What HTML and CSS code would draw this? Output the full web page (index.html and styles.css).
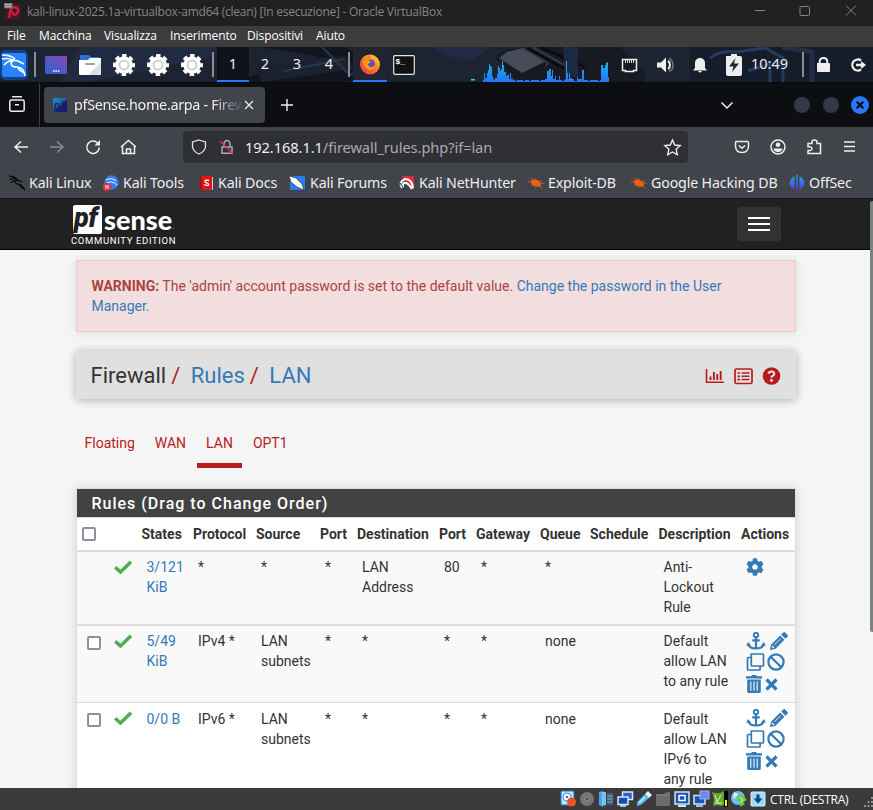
FILE: index.html
```html
<!DOCTYPE html>
<html lang="it">
<head>
<meta charset="utf-8">
<title>pfSense.home.arpa - Firewall: Rules: LAN</title>
<link rel="stylesheet" href="styles.css">
</head>
<body>
<svg class="defs" width="0" height="0">
  <defs>
    <linearGradient id="gMon" x1="0" y1="1" x2="1" y2="0"><stop offset="0" stop-color="#2a62d4"/><stop offset="1" stop-color="#8a47b4"/></linearGradient>
    <linearGradient id="gCpu" x1="0" y1="0" x2="0" y2="1"><stop offset="0" stop-color="#16b8f0"/><stop offset="1" stop-color="#2673f5"/></linearGradient>
    <linearGradient id="gFox" x1="1" y1="0" x2="0.2" y2="1"><stop offset="0" stop-color="#ffe13c"/><stop offset=".45" stop-color="#ff8b1c"/><stop offset="1" stop-color="#f5304c"/></linearGradient>
    <linearGradient id="gOff" gradientUnits="userSpaceOnUse" x1="0" y1="0" x2="0" y2="16"><stop offset="0" stop-color="#10b5c0"/><stop offset=".5" stop-color="#3a6cf0"/><stop offset="1" stop-color="#6a2fc4"/></linearGradient>
    <linearGradient id="gPf" x1="0" y1="0" x2="1" y2="1"><stop offset="0" stop-color="#1d86e0"/><stop offset=".5" stop-color="#1566b8"/><stop offset=".55" stop-color="#211a80"/><stop offset="1" stop-color="#1c1272"/></linearGradient>
    <symbol id="gear" viewBox="0 0 22 22"><circle cx="11" cy="11" r="9.400" fill="none" stroke="#fff" stroke-width="3.200" stroke-dasharray="4.400 2.980" stroke-dashoffset="2.200"/><circle cx="11" cy="11" r="6.300" fill="#fff" stroke="#fff" stroke-width="5"/><circle cx="11" cy="11" r="4.500" fill="#fff" stroke="#c3c6ca" stroke-width="1.600"/></symbol>
    <symbol id="dragon" viewBox="0 0 16 16"><path d="M0 1.200C3 1 5 1.500 7 3.200 M1 4.500C3 3.200 6 3 8 4 M2.500 7.300C4.500 5.500 7 4.800 10 5.500 L12.800 7 M7 4C5.500 7 6.500 9 10 9.500C13 10 14 11.500 15.600 15 M10.500 9.800C11 12 13 12 13.800 13.500" fill="none" stroke="currentColor" stroke-width="1.300" stroke-linecap="round"/></symbol>
    <symbol id="bug" viewBox="0 0 16 13"><ellipse cx="8" cy="6.700" rx="5.300" ry="3.200" transform="rotate(25 8 6.700)" fill="#ef6010"/><path d="M4 5L0 5.500 M5 3L3 1 M7 3L8 1.500 M12 6.500L15.800 7 M12 9L14 12 M6 9L3 8.500 M8 10L7 11.500 M11 5L13.500 4.500" stroke="#ef6010" stroke-width=".8"/></symbol>
    <symbol id="check" viewBox="0 0 18 14"><path d="M1.200 7.200L6.500 12L17 1.800" fill="none" stroke="#4caf50" stroke-width="3.500"/></symbol>
    <symbol id="cog" viewBox="0 0 512 512"><path fill="currentColor" d="M487.400 315.700l-42.600-24.600c4.300-23.200 4.300-47 0-70.200l42.600-24.600c4.900-2.800 7.100-8.600 5.500-14-11.100-35.600-30-67.800-54.700-94.600-3.800-4.100-10-5.100-14.800-2.300L380.800 110c-17.900-15.400-38.500-27.300-60.800-35.100V25.800c0-5.600-3.900-10.500-9.400-11.700-36.700-8.200-74.300-7.800-109.200 0-5.500 1.200-9.400 6.100-9.400 11.700V75c-22.200 7.900-42.800 19.800-60.800 35.100L88.700 85.500c-4.900-2.800-11-1.900-14.800 2.300-24.700 26.700-43.600 58.900-54.700 94.600-1.700 5.400.6 11.200 5.500 14L67.300 221c-4.300 23.200-4.300 47 0 70.200l-42.600 24.600c-4.900 2.800-7.100 8.600-5.500 14 11.100 35.600 30 67.800 54.700 94.600 3.800 4.100 10 5.100 14.800 2.300l42.600-24.600c17.900 15.400 38.500 27.300 60.800 35.100v49.200c0 5.600 3.900 10.500 9.400 11.700 36.700 8.200 74.300 7.800 109.200 0 5.500-1.200 9.400-6.100 9.400-11.700v-49.200c22.200-7.900 42.800-19.800 60.800-35.100l42.600 24.600c4.900 2.800 11 1.900 14.800-2.300 24.700-26.700 43.600-58.900 54.700-94.600 1.500-5.500-.7-11.300-5.600-14.100zM256 336c-44.100 0-80-35.900-80-80s35.900-80 80-80 80 35.900 80 80-35.900 80-80 80z"/></symbol>
    <symbol id="anchor" viewBox="0 0 20 18"><circle cx="10" cy="3" r="2.200" fill="none" stroke="currentColor" stroke-width="1.900"/><path d="M10 5V16 M6.200 8.300H13.800 M2.300 11.800C2.800 15 5.500 16.400 10 16.400S17.200 15 17.700 11.800" fill="none" stroke="currentColor" stroke-width="2.200"/><path d="M.2 13.800L2.200 10L5 13.800z M19.800 13.800L17.800 10L15 13.800z" fill="currentColor"/></symbol>
    <symbol id="pencil" viewBox="0 0 18 18"><path d="M0 18L1 12.800L10.200 3.600L14.400 7.800L5.200 17z M11.200 2.600L13.300.5Q14.200-.3 15.100.5L17.500 2.900Q18.300 3.800 17.500 4.700L15.400 6.800z" fill="currentColor"/><path d="M4.500 12.800L10.700 6.600" stroke="#f9f9f9" stroke-width=".9"/><path d="M1.900 14L4 16" stroke="#f9f9f9" stroke-width="1.300"/></symbol>
    <symbol id="clone" viewBox="0 0 18 18"><path d="M4.800 1H16.300Q17 1 17 1.700V12.300Q17 13 16.300 13H5.500Q4.800 13 4.800 12.300z M4.500 4.500H1.700Q1 4.500 1 5.200V16.300Q1 17 1.700 17H13Q13.600 17 13.600 16.300V13.500" fill="none" stroke="currentColor" stroke-width="1.700"/></symbol>
    <symbol id="ban" viewBox="0 0 18 18"><circle cx="9" cy="9" r="7.600" fill="none" stroke="currentColor" stroke-width="2.200"/><path d="M3.700 3.700L14.300 14.300" stroke="currentColor" stroke-width="2.200"/></symbol>
    <symbol id="trash" viewBox="0 0 16 18"><path d="M0 1.200H5L6 0H10L11 1.200H16V3.400H0z M1.200 4.500H14.800V16.500Q14.800 18 13.300 18H2.700Q1.200 18 1.200 16.500z" fill="currentColor"/><path d="M4.800 6.500V15.800 M8 6.500V15.800 M11.200 6.500V15.800" stroke="#f9f9f9" stroke-width="1.100"/></symbol>
    <symbol id="times" viewBox="0 0 13 13"><path d="M1.500 1.500L11.500 11.500 M11.500 1.500L1.500 11.500" stroke="currentColor" stroke-width="3.200"/></symbol>
  </defs>
</svg>

<header class="titlebar">
  <svg class="vbox" viewBox="0 0 16 16"><rect x="1" y="1" width="15" height="15" rx="1" fill="#3c1d24"/><path d="M5 14C5 7 7 3.500 10.500 4C14 4.600 14.200 8.500 11.500 10.500C9 12 7.500 10 8.300 7.800" fill="none" stroke="#e0173d" stroke-width="2.200"/><rect x="0" y="0" width="8" height="5" fill="#777"/><path d="M1 1.500H7M1 3.500H7" stroke="#c4c4c4" stroke-width=".8"/></svg>
  <span class="wintitle">kali-linux-2025.1a-virtualbox-amd64 (clean) [In esecuzione] - Oracle VirtualBox</span>
  <svg class="winbtns" viewBox="0 0 104 12"><path d="M0 5.500H10 M46 1.500h7.500q1 0 1 1v7q0 1-1 1h-7.500q-1 0-1-1v-7q0-1 1-1z M91 .5L101 10.500 M101 .5L91 10.500" fill="none" stroke="#858585"/></svg>
</header>
<nav class="menubar"><span>File</span><span>Macchina</span><span>Visualizza</span><span>Inserimento</span><span>Dispositivi</span><span>Aiuto</span></nav>

<section class="panel-bar">
  <svg class="wall" viewBox="0 0 873 35" preserveAspectRatio="none"><rect width="873" height="35" fill="#1c2331"/><path d="M80 0H230L210 10L90 35H60z" fill="#202b42"/><path d="M260 0H345L390 30L340 35H230L320 10z" fill="#12151d"/><path d="M255 18L345 9L355 22L262 35z" fill="#1c2130"/><path d="M284 24L345 12 M322 0L350 28L380 16" stroke="#24384e" stroke-width="2" fill="none"/><path d="M430 0H492L470 14L450 10z" fill="#202a42"/><path d="M494 11L507 2L540 0H620L645 25V35H520z" fill="#171a23"/><path d="M507 5L523 1L546 14L522 26L499 11z" fill="#474c58"/><path d="M523 1L548 16L546 19 M532 0L570 21" stroke="#343842" stroke-width="2" fill="none"/><path d="M527 1L565 22 M540 0L585 20" stroke="#090b10" stroke-width="2.500"/><path d="M563 0H578V30H565z" fill="#1b2941"/><path d="M690 0H873V35H690z" fill="#161d2a"/><path d="M710 11Q720 3 736 5L765 1L783 11V35 M748 24L770 17V35" fill="none" stroke="#203c5e" stroke-width="3"/><path d="M782 0L812 5V35" fill="none" stroke="#222f46" stroke-width="5"/></svg>
  <div class="launch">
    <svg class="kali" viewBox="0 0 28 30"><rect x="0" y="0" width="28" height="30" rx="5" fill="#173e8f"/><rect x="2" y="3" width="24" height="24" rx="2" fill="#2784fa"/><path d="M2 5C9 5 13 7 15 9 M2 9C7 8 11 9 13 10 M4 15C8 10 15 9 20 12L24 14 M14 10C9 13 11 17 17 17C22 18 24 20 25 26 M18 18C20 22 22 21 24 23" fill="none" stroke="#fff" stroke-width="1.600"/></svg>
    <i class="sep"></i>
    <svg viewBox="0 0 22 22"><rect y="2" width="22" height="18" rx="1" fill="url(#gMon)"/><path d="M8 17H14.500" stroke="#fff" stroke-width="1.500" stroke-dasharray="1.500 .9"/></svg>
    <svg viewBox="0 0 22 22"><path d="M1 2Q1 1 2 1H10L12 3H20V9H1z" fill="#2f6ed8"/><path d="M0 6H9L11 4H22V20Q22 21 21 21H1Q0 21 0 20z" fill="#fff"/><path d="M9 21L22 8V20Q22 21 21 21z" fill="#dfe1e4"/><rect x="6" y="9" width="10" height="2" rx="1" fill="#9aa0a8"/></svg>
    <svg viewBox="0 0 22 22"><use href="#gear"/></svg><svg viewBox="0 0 22 22"><use href="#gear"/></svg><svg viewBox="0 0 22 22"><use href="#gear"/></svg>
    <i class="sep"></i>
    <span class="ws on">1</span><span class="ws">2</span><span class="ws">3</span><span class="ws">4</span>
    <i class="sep"></i>
    <span class="task"><svg viewBox="0 0 22 22"><circle cx="11" cy="11.500" r="10" fill="url(#gFox)"/><path d="M2 8L5 3L7 6L11 1L12 5z" fill="#ff7a20"/><circle cx="11.500" cy="11" r="4.500" fill="#6248c8"/><path d="M4 8Q8 5 12 9L9 11Q9 14 13 14Q17 13 16 9Q18 16 11 17Q5 16 4 8z" fill="#ff9620"/></svg></span>
    <svg class="term" viewBox="0 0 22 22"><rect x=".7" y="1.700" width="20.600" height="18.600" rx="1" fill="#111" stroke="#e5e5e5" stroke-width="1.200"/><text x="2.500" y="10" font-size="8" fill="#fff" font-family="Liberation Mono" font-weight="bold">$_</text></svg>
  </div>
  <svg class="cpu" viewBox="0 0 138 22"><rect y="19" width="4" height="1.500" fill="#21e0c0"/><path fill="url(#gCpu)" d="M12 22V20H13V13H14V18H16V13H17V10H18V4H19V6H20V7H21V16H22V19H23V20H24V18H26V14H27V6H28V8H29V11H30V9H31V1H32V5H33V12H35V16H36V15H38V19H39V13H40V19H42V20H44V21H46V20H52V21H54V20H58V21H60V20H68V21H70V20H74V19H76V11H78V9H80V16H81V10H82V19H84V16H85V20H88V16H89V20H91V21H93V20H94V19H95V1H96V13H97V19H98V13H99V18H101V19H103V21H106V17H107V19H111V10H113V20H117V21H119V20H127V21H129V20H130V5H132V8H134V5H135V3H136V2H137V17H138V22z"/></svg>
  <svg class="tray" viewBox="0 0 130 22"><g fill="#eee"><path d="M2.500 5.500H16.500V16.500H13.500V17.500H5.500V16.500H2.500z" fill="none" stroke="#eee" stroke-width="1.500"/><path d="M5.500 6V9M7.500 6V9M9.500 6V9M11.500 6V9M13.500 6V9" stroke="#eee" stroke-width=".9"/><path d="M37 8.500H41L46 3.500V18.500L41 13.500H37z"/><path d="M48 7Q50 8 50 11T48 15" fill="none" stroke="#eee" stroke-width="2"/><path d="M49 4.500Q53 6 53 11T49 17.500" fill="none" stroke="#777" stroke-width="1.500"/><path d="M73 16.500L75 14V9Q75 4.500 80 3.700Q85 4.500 85 9V14L87 16.500z M78 17H82Q80 20 78 17z"/><path d="M106 2H111V0H117V2H120Q122 2 122 4V20Q122 22 120 22H108Q106 22 106 20z"/></g><path d="M115.500 4L109 12.500H113.500L112 18L119 9.500H114z" fill="#20242d"/></svg>
  <span class="clock">10:49</span><i class="sep"></i>
  <svg class="tray2" viewBox="0 0 52 18"><path d="M2 7H14Q15 7 15 8V15Q15 16 14 16H3Q2 16 2 15z" fill="#eee"/><path d="M4.700 8V5Q5 2 8.500 2T12.200 5V8" fill="none" stroke="#eee" stroke-width="2"/><path d="M46 4.500A5.500 5.500 0 1 0 46 13.500" fill="none" stroke="#eee" stroke-width="2.300"/><path d="M41 7.800H46V5L51 9L46 13V10.200H41z" fill="#eee"/></svg>
</section>

<section class="tabstrip">
  <svg class="recent" viewBox="0 0 16 16"><path d="M3 .8H13 M2.500 4H13.500Q15.200 4 15.200 5.700V13.500Q15.200 15.200 13.500 15.200H2.500Q.8 15.200 .8 13.500V5.700Q.8 4 2.500 4z M6 8.700H10" fill="none" stroke="#eee" stroke-width="1.500"/></svg>
  <i class="tabline"></i>
  <div class="tab"><svg class="fav" viewBox="0 0 14 14"><rect width="14" height="14" fill="url(#gPf)"/><text x="1" y="10.500" font-family="Roboto" font-style="italic" font-weight="bold" font-size="11" fill="#272b42">pf</text></svg><span class="tabname">pfSense.home.arpa - Firewall</span><svg class="close" viewBox="0 0 10 10"><path d="M1 1L9 9M9 1L1 9" stroke="#eee" stroke-width="1.200"/></svg></div>
  <svg class="plus" viewBox="0 0 12 12"><path d="M6 0V12M0 6H12" stroke="#eee" stroke-width="1.400"/></svg>
  <svg class="chev" viewBox="0 0 12 7"><path d="M.5.500L6 6L11.500.500" fill="none" stroke="#eee" stroke-width="1.500"/></svg>
  <i class="dot"></i><i class="dot"></i>
  <svg class="wclose" viewBox="0 0 18 18"><circle cx="9" cy="9" r="9" fill="#2876fa"/><path d="M5.700 5.700L12.300 12.300M12.300 5.700L5.700 12.300" stroke="#080d18" stroke-width="2.100"/></svg>
</section>

<section class="toolbar">
  <svg class="navs" viewBox="0 0 124 16"><g fill="none" stroke="#eee" stroke-width="1.500"><path d="M8 2.500L2 8L8 13.500M2 8H15"/><path d="M44 2.500L50 8L44 13.500M50 8H37" stroke="#8b8c92"/><path d="M84.500 4A6.200 6.200 0 1 0 86.200 8.500"/><path d="M108 8L115.500 1.500L123 8 M109.500 7V14.500H121.500V7 M113.500 14V10H117.500V14"/></g><path d="M87 1V6.500H81.500z" fill="#eee"/></svg>
  <div class="url">
    <svg class="shield" viewBox="0 0 44 16"><path d="M8 1L14.500 3V7.500Q14 12.500 8 15Q2 12.500 1.500 7.500V3z" fill="none" stroke="#e5e5e5" stroke-width="1.300"/><path d="M31 8H41V14.300H31z M33 8V4.500Q33.500 1.500 36 1.500T39 4.500V8" fill="none" stroke="#aaa" stroke-width="1.500"/><path d="M29 2L42 15" stroke="#e02c50" stroke-width="1.400"/></svg>
    <span class="addr">192.168.1.1<em>/firewall_rules.php?if=lan</em></span>
    <svg class="star" viewBox="0 0 16 16"><path d="M8 1L10.100 5.700L15.200 6.200L11.400 9.700L12.500 14.800L8 12.200L3.500 14.800L4.600 9.700L.8 6.200L5.900 5.700z" fill="none" stroke="#eee" stroke-width="1.300"/></svg>
  </div>
  <svg class="exts" viewBox="0 0 122 16"><g fill="none" stroke="#eee" stroke-width="1.500"><path d="M2 2.500H13.500Q14.500 2.500 14.500 4V7.500Q14 13.500 8 13.500T1.500 7.500V4Q1.500 2.500 2 2.500z M5 6.500L8 9.300L11 6.500"/><circle cx="44" cy="8" r="7"/><path d="M74 14.500V11.500H76Q78 11 78 9.700Q78 8 76 7.800H74V4.500H78V3Q78 1 80.500 1T83 3V4.500H86.500V14.500z"/><path d="M110 3H121M110 7.500H121M110 12H121"/></g><circle cx="44" cy="5.800" r="2.300" fill="#eee"/><path d="M39.500 9.500H48.500Q48 13 44 13T39.500 9.500z" fill="#eee"/></svg>
</section>
<section class="bookmarks">
  <svg viewBox="0 0 16 16" class="blk"><use href="#dragon"/></svg><span>Kali Linux</span>
  <svg viewBox="0 0 16 16" class="wht"><circle cx="8.500" cy="7.500" r="7.200" fill="#2c7ef4"/><path d="M3 5Q9 2 13 6 M4 8Q9 5 14 10" fill="none" stroke="#fff"/><circle cx="4" cy="12" r="4" fill="#e3343b"/><path d="M2 11H6M3 11V14M5 11V14" stroke="#fff" stroke-width=".8"/></svg><span>Kali Tools</span>
  <svg viewBox="0 0 16 16"><rect x="0" y="1" width="12" height="14" fill="#df1516"/><path d="M0 1H1.500V15H0z" fill="#991015"/><path d="M9 5.500Q5 4.500 5 6.500Q5 7.500 7 8Q9 8.700 8.500 10Q7 11 4 9.500" stroke="#fff" stroke-width="1.300" fill="none"/><path d="M12.500 2V15" stroke="#ccc"/></svg><span>Kali Docs</span>
  <svg viewBox="0 0 16 16"><path d="M1 15V2L5 1H16V15z" fill="#247cf2"/><path d="M0 1L7 3L13 9L15 15L8 12L2 7z" fill="#fff" stroke="#222" stroke-width=".6"/></svg><span>Kali Forums</span>
  <svg viewBox="0 0 16 16"><path d="M2 1H15V15z" fill="#e22b3d"/><path d="M3 13Q-1 7 6 4Q13 4 14 13 M4 13Q3 7 7 8Q10 9 13 14" fill="none" stroke="#fff" stroke-width="2"/><path d="M1 8L5 14" stroke="#222"/></svg><span>Kali NetHunter</span>
  <svg viewBox="0 0 16 13"><use href="#bug"/></svg><span>Exploit-DB</span>
  <svg viewBox="0 0 16 13"><use href="#bug"/></svg><span>Google Hacking DB</span>
  <svg viewBox="0 0 16 16"><g fill="url(#gOff)"><path d="M5.500 1V15Q1 12 .5 8Q1 4 5.500 1z"/><rect x="7.200" y="0" width="1.500" height="16"/><path d="M10.500 1V15Q15 12 15.500 8Q15 4 10.500 1z"/></g></svg><span>OffSec</span>
</section>

<main class="page">
  <div class="navbar">
    <div class="brand"><div class="logo"><span class="pf">pf</span><span class="sense">sense</span><span class="reg">.</span></div><div class="edition">COMMUNITY EDITION</div></div>
    <button class="burger" aria-label="Menu"><i></i><i></i><i></i></button>
  </div>
  <div class="container">
    <div class="alert"><b>WARNING:</b> The 'admin' account password is set to the default value. <a>Change the password in the User Manager.</a></div>
    <div class="crumbs"><span>Firewall</span><em>/</em><a>Rules</a><em>/</em><a>LAN</a>
      <svg class="hicons" viewBox="0 0 76 18"><g fill="none" stroke="#b71c1c" stroke-width="1.600"><path d="M1.500 2V15.200H19"/><path d="M5.500 13V9.500M8.900 13V5M12.300 13V7M15.700 13V4" stroke-width="1.900"/><rect x="30" y="2" width="17" height="14.500" rx="1.500" stroke-width="1.700"/><path d="M36.500 6H44.500M36.500 9.300H44.500M36.500 12.600H44.500" stroke-width="1.500"/><path d="M32.500 6H35M32.500 9.300H35M32.500 12.600H35" stroke-width="1.700"/></g><circle cx="66.500" cy="9" r="8.800" fill="#b71c1c"/><path d="M63.500 6.800Q64 4.500 66.500 4.500T69.300 6.700Q69.300 8 67.500 8.900Q66.500 9.400 66.500 10.700" fill="none" stroke="#e8e8e8" stroke-width="2"/><circle cx="66.500" cy="13.500" r="1.400" fill="#e8e8e8"/></svg>
    </div>
    <ul class="tabs"><li>Floating</li><li>WAN</li><li class="active">LAN</li><li>OPT1</li></ul>
    <div class="rules">
      <h2>Rules (Drag to Change Order)</h2>
      <table>
        <colgroup><col class="c1"><col class="c2"><col class="c3"><col class="c4"><col class="c5"><col class="c6"><col class="c7"><col class="c6"><col class="c9"><col class="c10"><col class="c11"><col class="c12"><col class="c13"></colgroup>
        <thead><tr><th><i class="cb"></i></th><th></th><th>States</th><th>Protocol</th><th>Source</th><th>Port</th><th>Destination</th><th>Port</th><th>Gateway</th><th>Queue</th><th>Schedule</th><th>Description</th><th>Actions</th></tr></thead>
        <tbody>
          <tr class="lockout"><td></td><td class="st"><svg class="ck"><use href="#check"/></svg></td><td><a>3/121 KiB</a></td><td>*</td><td>*</td><td>*</td><td>LAN Address</td><td>80</td><td>*</td><td>*</td><td></td><td>Anti-<br>Lockout<br>Rule</td><td class="act"><svg class="cog"><use href="#cog"/></svg></td></tr>
          <tr class="r4"><td><i class="cb"></i></td><td class="st"><svg class="ck"><use href="#check"/></svg></td><td><a>5/49 KiB</a></td><td>IPv4 *</td><td>LAN subnets</td><td>*</td><td>*</td><td>*</td><td>*</td><td>none</td><td></td><td>Default<br>allow LAN<br>to any rule</td><td class="act"><div class="acts"><svg class="an"><use href="#anchor"/></svg><svg class="pe"><use href="#pencil"/></svg><svg class="cl"><use href="#clone"/></svg><svg class="ba"><use href="#ban"/></svg><svg class="tr"><use href="#trash"/></svg><svg class="ti"><use href="#times"/></svg></div></td></tr>
          <tr class="r6"><td><i class="cb"></i></td><td class="st"><svg class="ck"><use href="#check"/></svg></td><td><a>0/0 B</a></td><td>IPv6 *</td><td>LAN subnets</td><td>*</td><td>*</td><td>*</td><td>*</td><td>none</td><td></td><td>Default<br>allow LAN<br>IPv6 to<br>any rule</td><td class="act"><div class="acts"><svg class="an"><use href="#anchor"/></svg><svg class="pe"><use href="#pencil"/></svg><svg class="cl"><use href="#clone"/></svg><svg class="ba"><use href="#ban"/></svg><svg class="tr"><use href="#trash"/></svg><svg class="ti"><use href="#times"/></svg></div></td></tr>
        </tbody>
      </table>
    </div>
  </div>
  <i class="scroll"></i>
</main>

<footer class="status">
  <svg viewBox="0 0 16 16"><rect x="1" y="0" width="13" height="14" rx="1" fill="#bde1f7" stroke="#2377c5"/><circle cx="7" cy="6" r="4" fill="#fff" stroke="#3b8bd0"/><circle cx="7" cy="6" r="1.300" fill="#2377c5"/><circle cx="11.500" cy="11" r="4.500" fill="#f0522e"/></svg>
  <svg viewBox="0 0 16 16"><circle cx="8" cy="8" r="7" fill="#757575"/><circle cx="8" cy="8" r="2" fill="#484848" stroke="#999"/></svg>
  <svg viewBox="0 0 16 16"><path d="M1 1L5 0V16L1 14z" fill="#4aa6ef"/><path d="M4 1H8V14L4 15z" fill="#7cc3f5"/><path d="M9 2H15V14H9z" fill="#3c6282"/><path d="M9 5H15M9 8H15M9 11H15" stroke="#86a6be"/></svg>
  <svg viewBox="0 0 16 16"><rect x="5.500" y="1" width="10" height="7.500" fill="#2463c9" stroke="#d5eafb" stroke-width="1.500"/><rect x="1" y="6" width="10" height="7.500" fill="#174fae" stroke="#d5eafb" stroke-width="1.500"/><path d="M3 15H9" stroke="#d5eafb" stroke-width="1.500"/></svg>
  <svg viewBox="0 0 16 16"><path d="M1 15Q0 12 2 10L9 3L13 7L6 13Q3 15 1 15z" fill="#55b9f4"/><path d="M9 3L12 0L16 4L13 7z" fill="#e8f1f7"/><path d="M3 12L9 6" stroke="#c7edff" stroke-width="1.500"/></svg>
  <svg viewBox="0 0 16 16"><path d="M1 3H9L11 1H15V15H1z" fill="#6c6c6c"/><path d="M1 4H15" stroke="#818181"/></svg>
  <svg viewBox="0 0 16 16"><rect x="1" y="1" width="14" height="12" fill="#1756b3" stroke="#cce6fa" stroke-width="1.500"/><rect x="5" y="4.500" width="6" height="5" fill="#1756b3" stroke="#fff" stroke-width="1.500"/><path d="M4 15H12" stroke="#cce6fa" stroke-width="2"/></svg>
  <svg viewBox="0 0 16 16"><rect x="1" y="4.500" width="11" height="8.500" fill="#1955b7" stroke="#cce6fa" stroke-width="1.500"/><rect x="7" y="0" width="9" height="8" fill="#7188e8" stroke="#9aabfa"/><path d="M3 15H10" stroke="#cce6fa" stroke-width="1.500"/></svg>
  <svg viewBox="0 0 16 16"><rect x="12" width="4" height="16" fill="#050505"/><rect x="13" y="9" width="2" height="6" fill="#fff200"/><path d="M0 1L3 2H8L12 0V14L9 15L6 14L1 15L2 8z" fill="#62a734"/><path d="M3 4L5 11L9 4M3 12H10" fill="none" stroke="#bee794" stroke-width="1.300"/></svg>
  <svg viewBox="0 0 16 16"><circle cx="7" cy="7" r="7" fill="#6bbff1"/><path d="M3 1L7 3L5 6L2 8z" fill="#d8f1ff"/><path d="M7 5L10 3L16 9L12 11L14 13L9 16V12L6 9z" fill="#73c83c"/><path d="M9 6L12 9L9 12" fill="none" stroke="#e2f8d0" stroke-width="1"/></svg>
  <svg viewBox="0 0 16 16"><rect x="1" y="1" width="14" height="14" rx="1" fill="#a1d9f8" stroke="#d2f2ff"/><path d="M6.500 3.500H9.500V7.500H12.500L8 12.500L3.500 7.500H6.500z" fill="#10407c"/></svg>
  <span class="hostkey">CTRL (DESTRA)</span>
  <svg class="grip" viewBox="0 0 11 11"><path d="M10 0v2M6.500 4v2M10 4v2M3 8v2M6.500 8v2M10 8v2" stroke="#909090" stroke-width="2"/></svg>
</footer>
</body>
</html>
```
FILE: styles.css
```css
* { box-sizing: border-box; }
body { margin: 0; width: 873px; height: 810px; overflow: hidden; background: #f5f5f5; font-family: "Noto Sans", sans-serif; display: flex; flex-direction: column; }
svg { display: block; flex: none; overflow: visible; }
.defs { position: absolute; }
a { color: #337ab7; }
em { font-style: normal; }

.titlebar { height: 26px; flex: none; background: #202020; display: flex; align-items: center; padding: 0 14px 4px 4px; color: #858585; font: 12px "Open Sans", sans-serif; }
.vbox { width: 17px; height: 17px; margin-right: 6px; }
.wintitle { white-space: nowrap; letter-spacing: -.25px; }
.winbtns { width: 104px; height: 12px; margin-left: auto; }
.menubar { height: 21px; flex: none; background: #3c3c3d; color: #fff; font: 12px/20px "Open Sans", sans-serif; display: grid; grid-template-columns: 32px 65px 66px 77px 69px 60px; padding-left: 7px; letter-spacing: -.1px; }

.panel-bar { height: 35px; flex: none; position: relative; display: flex; align-items: center; color: #eee; }
.wall { position: absolute; inset: 0; width: 873px; height: 35px; z-index: -1; }
.launch { display: flex; align-items: center; width: 471px; height: 35px; }
.launch > svg { width: 22px; height: 22px; margin-right: 12px; }
.launch > .kali { width: 28px; height: 30px; margin-right: 6px; }
.sep { width: 2px; height: 25px; background: #8b8d91; flex: none; }
.launch .sep { margin-right: 9px; }
.launch .sep:nth-of-type(2) { margin: 0 3px 0 -3px; }
.launch .sep:nth-of-type(3) { margin: 0 3px 0 3px; }
.ws { width: 32px; height: 35px; text-align: center; font-size: 14.500px; line-height: 33px; }
.ws.on { background: #10131b; border-bottom: 2px solid #2876fa; }
.task { width: 34px; height: 35px; padding: 6px; background: #20252f; border-bottom: 2px solid #2876fa; margin-right: 6px; }
.task svg { width: 22px; height: 22px; }
.cpu { width: 138px; height: 22px; margin-top: 13px; }
.tray { width: 130px; height: 22px; margin-left: 11px; }
.clock { font-size: 14.500px; line-height: 20px; width: 51px; margin: -3px 0 0 1px; }
.tray2 { width: 52px; height: 18px; margin-left: 11px; }

.tabstrip { height: 45px; flex: none; background: #0c0e12; display: flex; align-items: center; border-top: 1px solid #080a0e; }
.recent { width: 16px; height: 16px; margin: 0 14px 2px 9px; }
.tabline { width: 1px; height: 44px; background: #3a3c42; margin-right: 4px; }
.tab { width: 221px; height: 36px; border-radius: 4px; background: #42444c; display: flex; align-items: center; padding-left: 9px; margin-right: 16px; margin-bottom: 1px; }
.fav { width: 14px; height: 14px; margin-right: 7px; }
.tabname { width: 168px; margin-right: 2px; font-size: 14.400px; letter-spacing: -.32px; color: #f0f0f0; white-space: nowrap; overflow: hidden; -webkit-mask-image: linear-gradient(90deg, #000 138px, transparent 170px); }
.close { width: 10px; height: 10px; }
.plus { width: 12px; height: 12px; }
.chev { width: 12px; height: 7px; margin-left: 428px; margin-right: 61px; }
.dot { width: 16px; height: 16px; border-radius: 50%; background: #333944; margin-right: 13px; }
.wclose { width: 18px; height: 18px; margin-left: -1px; }

.toolbar { height: 40px; flex: none; background: #42444c; display: flex; align-items: center; padding: 0 0 0 13px; }
.navs { width: 124px; height: 16px; }
.url { width: 505px; height: 32px; margin-left: 46px; background: #2f3036; border-radius: 4px; display: flex; align-items: center; padding-left: 8px; }
.shield { width: 44px; height: 16px; }
.addr { width: 420px; margin-left: 10px; font-size: 14.600px; letter-spacing: -.06px; color: #eee; }
.addr em { color: #a9a9ae; }
.star { width: 17px; height: 17px; margin-left: -1px; }
.exts { width: 122px; height: 16px; margin-left: 46px; }
.bookmarks { height: 31px; flex: none; background: #42444c; color: #eee; font-size: 14.200px; letter-spacing: -.14px; white-space: nowrap; display: grid; align-items: center; grid-template-columns: 20px 74px 20px 77px 18px 71px 21px 89px 20px 109px 20px 83px 20px 138px 20px auto; padding-left: 9px; }
.bookmarks svg { width: 16px; height: 16px; }
.blk { color: #0a0a0a; }

.page { height: 590px; flex: none; border-top: 1px solid #111; background: #f5f5f5; overflow: hidden; position: relative; font: 14px/20px Roboto, sans-serif; color: #333; }
.navbar { height: 51px; background: #212121; border-bottom: 1px solid #000; display: flex; justify-content: space-between; padding: 0 92px 0 71px; }
.brand { color: #fff; padding-top: 6px; }
.logo { display: flex; height: 29px; padding-left: 2px; }
.pf { width: 29px; height: 29px; background: #fff; color: #212121; font: italic 900 27px/27px Roboto; border-radius: 2px; letter-spacing: -.5px; padding-left: 1px; }
.sense { font: 900 27px/30px Lato; margin-left: 2px; }
.reg { font-size: 10px; line-height: 41px; color: #999; }
.edition { font-size: 9.500px; line-height: 12px; letter-spacing: .65px; white-space: nowrap; margin-top: 1px; }
.burger { width: 44px; height: 34px; margin-top: 8px; border: 0; border-radius: 3px; background: #333; padding: 0 11px; display: flex; flex-direction: column; gap: 4px; justify-content: center; }
.burger i { height: 2px; background: #fff; }
.container { width: 720px; margin-left: 76px; }
.alert { height: 72px; margin-top: 10px; border: 1px solid #ebccd1; background: #f2dede; color: #a94442; padding: 15px 15px 15px 14.500px; box-shadow: 0 1px 10px rgba(0,0,0,.1); }
.crumbs { height: 48px; margin-top: 19px; background: #e0e0e0; border-radius: 3px; box-shadow: 0 1px 10px rgba(0,0,0,.3); display: flex; align-items: center; padding: 2px 15px 0 14.500px; font-size: 22px; }
.crumbs em { color: #b71c1c; margin: 0 10.500px 0 5px; }
.hicons { width: 76px; height: 18px; margin-left: auto; }
.tabs { list-style: none; margin: 24px 0 20px -.5px; padding: 0; display: flex; color: #b71c1c; }
.tabs li { height: 45px; padding: 10px 9px; line-height: 20px; margin-right: 2px; }
.tabs .active { border-bottom: 5px solid #b71c1c; }
.rules { border: 1px solid #ddd; background: #fff; box-shadow: 0 1px 10px rgba(0,0,0,.15); }
h2 { height: 28px; margin: 0; padding: 1px 0 0 14.500px; background: #424242; color: #fff; font: 500 16px/28px Roboto; letter-spacing: 1px; }
table { width: 718px; table-layout: fixed; border-collapse: separate; border-spacing: 0; border-top: 1px solid #ddd; }
.c1 { width: 32px; } .c2 { width: 27.500px; } .c3 { width: 51.500px; } .c4 { width: 63px; } .c5 { width: 64px; } .c6 { width: 37px; } .c7 { width: 82px; } .c9 { width: 64px; } .c10 { width: 50px; } .c11 { width: 68.500px; } .c12 { width: 82.500px; } .c13 { width: 59px; }
th { height: 34px; padding: 0 0 0 5px; text-align: left; border-bottom: 2px solid #ddd; white-space: nowrap; font-weight: 700; }
td { padding: 5px 0 0 10px; vertical-align: top; }
.lockout td { height: 74px; background: #f9f9f9; border-bottom: 2px solid #ddd; }
.r4 td { height: 77px; background: #f9f9f9; border-bottom: 1px solid #ddd; }
.r6 td { height: 100px; padding-top: 6px; }
.cb { display: block; width: 14px; height: 14px; border: 2px solid #8f8f9d; border-radius: 2px; background: #fff; }
td .cb { margin-top: 5px; }
.r6 .cb { margin-top: 4px; }
td.st { padding-left: 5px; }
.ck { width: 18px; height: 14px; margin-top: 3px; }
.r6 .ck { margin-top: 2px; }
.act { color: #337ab7; }
.cog { width: 18px; height: 18px; margin-top: 1px; }
.acts { display: grid; grid-template-columns: repeat(10, 4.500px); grid-template-rows: 21px 22px 18px; padding-top: 1px; }
.r6 .acts { padding-top: 0; }
.an { width: 20px; height: 18px; grid-area: 1 / 1 / 2 / 5; }
.pe { width: 18px; height: 18px; grid-area: 1 / 6; margin-left: 1px; }
.cl { width: 19px; height: 18px; grid-area: 2 / 1; }
.ba { width: 18px; height: 18px; grid-area: 2 / 6; margin-left: -1.500px; }
.tr { width: 16px; height: 18px; grid-area: 3 / 1; }
.ti { width: 13px; height: 13px; grid-area: 3 / 5; margin: 3px 0 0 1px; }
.scroll { position: absolute; right: 0; top: 2px; width: 3px; height: 431px; background: #7d8280; border-radius: 2px 0 0 2px; }

.status { height: 22px; flex: none; background: #3b3b3c; display: flex; align-items: center; gap: 3px; padding-left: 560px; color: #fff; font: 12px "Open Sans", sans-serif; }
.status svg { width: 16px; height: 16px; }
.hostkey { white-space: nowrap; margin-left: 1px; letter-spacing: -.25px; }
.status .grip { width: 11px; height: 11px; margin: 6px 0 0 auto; }
```
